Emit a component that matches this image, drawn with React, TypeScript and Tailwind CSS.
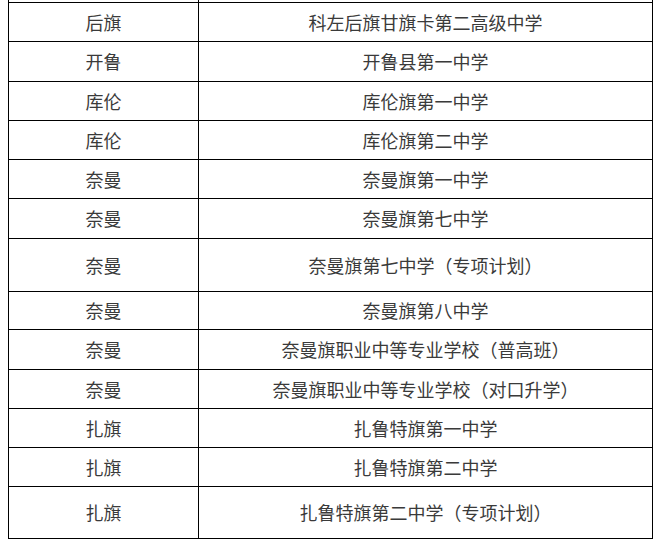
const rows: [string, string, number][] = [
  ['后旗', '科左后旗甘旗卡第二高级中学', 39],
  ['开鲁', '开鲁县第一中学', 40],
  ['库伦', '库伦旗第一中学', 39],
  ['库伦', '库伦旗第二中学', 39],
  ['奈曼', '奈曼旗第一中学', 39],
  ['奈曼', '奈曼旗第七中学', 40],
  ['奈曼', '奈曼旗第七中学（专项计划）', 53],
  ['奈曼', '奈曼旗第八中学', 38],
  ['奈曼', '奈曼旗职业中等专业学校（普高班）', 40],
  ['奈曼', '奈曼旗职业中等专业学校（对口升学）', 39],
  ['扎旗', '扎鲁特旗第一中学', 39],
  ['扎旗', '扎鲁特旗第二中学', 39],
  ['扎旗', '扎鲁特旗第二中学（专项计划）', 52],
];

export default function App() {
  return (
    <div className="min-h-[549px] bg-white pl-[8px]" style={{ fontFamily: '"Noto Sans CJK SC", "Noto Sans", sans-serif' }}>
      <div className="w-[645px]">
        {/* cut-off row above */}
        <div className="flex h-[2px] border-x border-black">
          <div className="w-[190px] border-r border-black" />
          <div className="flex-1" />
        </div>
        <div className="border border-b-0 border-black">
          {rows.map(([area, school, h], i) => (
            <div
              key={i}
              className="flex border-b border-black text-[18px] text-[#3a3a3a]"
              style={{ height: h }}
            >
              <div className="flex w-[190px] items-center justify-center border-r border-black">{area}</div>
              <div className="flex flex-1 items-center justify-center">{school}</div>
            </div>
          ))}
        </div>
      </div>
    </div>
  );
}
